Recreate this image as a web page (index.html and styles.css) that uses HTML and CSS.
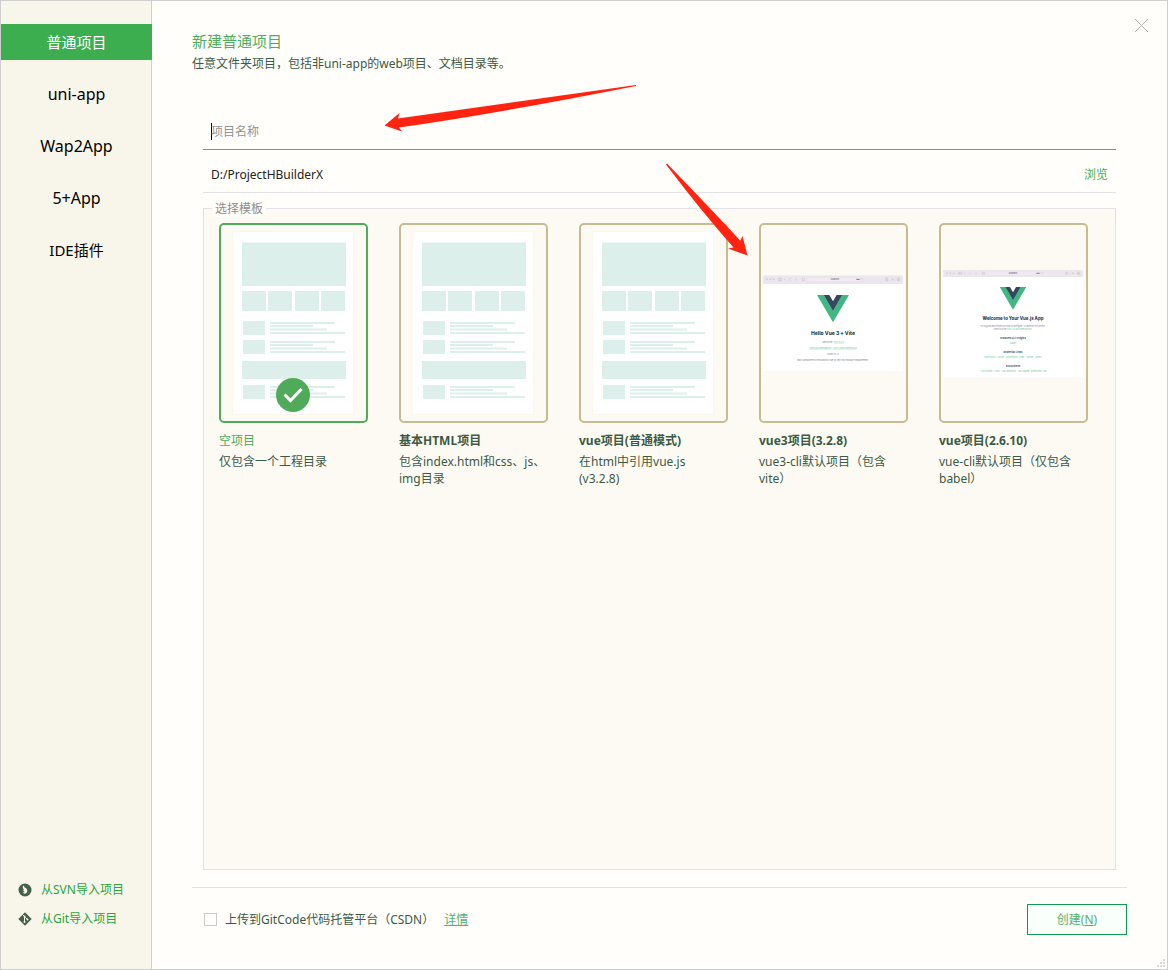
FILE: index.html
```html
<!DOCTYPE html>
<html lang="zh-CN">
<head>
<meta charset="utf-8">
<meta name="viewport" content="width=device-width, initial-scale=1">
<title>新建普通项目</title>
<link rel="stylesheet" href="styles.css">
</head>
<body>
<svg class="defs" width="0" height="0" aria-hidden="true">
  <defs>
    <symbol id="page" viewBox="0 0 145 196">
      <rect class="sheet-edge" x="11" y="6" width="122" height="184"/>
      <rect class="sheet" x="12" y="7" width="120" height="182"/>
      <g class="mint">
        <path d="M21 17.5h104V61H21zM21 66h24v20H21zM47 66h24v20H47zM74 66h24v20H74zM100 66h24v20h-24zM21 136h104v18H21z"/>
        <path id="row" d="M22 96h22v14H22zM49 97h65v2H49zM49 100h43v2H49zM49 103.500h57v2H49zM49 107h75v2H49z"/>
        <use href="#row" y="19"/>
        <use href="#row" y="64"/>
      </g>
    </symbol>
    <symbol id="vue" viewBox="0 0 96 82">
      <path fill="#41b883" d="M0 0h20l28 47L76 0h20L48 82z"/>
      <path fill="#35495e" d="M20 0h17l11 19L59 0h17L48 48z"/>
    </symbol>
    <symbol id="toolbar" viewBox="0 0 420 26" preserveAspectRatio="none">
      <path fill="#ece6ee" d="M4 0h412q4 0 4 4v22H0V4q0-4 4-4z"/>
      <rect fill="#f0ebf2" stroke="#e0d9e3" x="133" y="6" width="168" height="14" rx="3"/>
      <g fill="#d3cdd6"><circle cx="12" cy="12" r="3"/><circle cx="22" cy="12" r="3"/><circle cx="32" cy="12" r="3"/></g>
      <g fill="none" stroke="#c4bec8" stroke-width="1.500">
        <path d="M47 8h9v8h-9zM50 8v8M63 11l2 2 2-2M83 8l-4 4 4 4M97 8l4 4-4 4M118 8h6v8h-6zM368 10h6v7h-6zM371 5v8M386 12h7M389 8v8M403 8h7v8h-7zM406 8v8"/>
      </g>
      <path stroke="#77717c" stroke-width="3" d="M280 12h10"/>
      <circle cx="296" cy="12" r="3" fill="none" stroke="#c4bec8"/>
    </symbol>
  </defs>
</svg>

<div class="dialog">
  <aside class="side">
    <nav class="types">
      <button type="button" class="type active">普通项目</button>
      <button type="button" class="type latin">uni-app</button>
      <button type="button" class="type latin">Wap2App</button>
      <button type="button" class="type latin">5+App</button>
      <button type="button" class="type">IDE插件</button>
    </nav>
    <div class="imports">
      <a href="#svn" class="import">
        <svg width="14" height="14" viewBox="0 0 14 14" aria-hidden="true"><circle cx="7" cy="7" r="6.500" fill="#44604a"/><path fill="#f8f5ea" d="M5 2.500c1 .1 1.400 1 1.600 2C8.500 5 9.500 6.500 9.300 8.300 9 10 7.800 10.900 6.300 10.800L4.600 9.500l2.200-.3L5 7.500l1-.4L4.800 5z"/></svg>
        从SVN导入项目
      </a>
      <a href="#git" class="import">
        <svg width="14" height="14" viewBox="0 0 14 14" aria-hidden="true"><path fill="#44604a" d="M7 .3 13.700 7 7 13.700.3 7z"/><g fill="none" stroke="#f8f5ea"><path d="M4.500 2.500 6.500 4.500v6M6.500 4.800l3 2.700"/></g><g fill="#f8f5ea"><circle cx="6.500" cy="4.500" r="1"/><circle cx="6.500" cy="10" r="1"/><circle cx="9.500" cy="7.500" r="1"/></g></svg>
        从Git导入项目
      </a>
    </div>
  </aside>

  <main class="main">
    <button type="button" class="close" aria-label="关闭">
      <svg width="13" height="13" viewBox="0 0 13 13" aria-hidden="true"><path d="M0 0l13 13M13 0 0 13" stroke="#b4b4b4" fill="none"/></svg>
    </button>
    <h1 class="title">新建普通项目</h1>
    <p class="desc">任意文件夹项目，包括非uni-app的web项目、文档目录等。</p>

    <div class="form">
      <div class="field name">
        <span class="caret"></span>
        <input type="text" class="input" placeholder="项目名称" aria-label="项目名称">
      </div>
      <div class="field path">
        <input type="text" class="input" value="D:/ProjectHBuilderX" aria-label="项目路径">
        <button type="button" class="browse">浏览</button>
      </div>

      <fieldset class="templates">
        <legend>选择模板</legend>
        <div class="cards">
          <label class="card">
            <input type="radio" name="tpl" class="pick" checked>
            <span class="thumb">
              <svg viewBox="0 0 145 196" aria-hidden="true"><use href="#page"/><circle cx="72" cy="170" r="17" fill="#4fab59"/><path d="M63.500 169.500l6 6 11-11.500" fill="none" stroke="#fff" stroke-width="3"/></svg>
            </span>
            <span class="label">空项目</span>
            <span class="note">仅包含一个工程目录</span>
          </label>
          <label class="card">
            <input type="radio" name="tpl" class="pick">
            <span class="thumb"><svg viewBox="0 0 145 196" aria-hidden="true"><use href="#page"/></svg></span>
            <span class="label">基本HTML项目</span>
            <span class="note">包含index.html和css、js、img目录</span>
          </label>
          <label class="card">
            <input type="radio" name="tpl" class="pick">
            <span class="thumb"><svg viewBox="0 0 145 196" aria-hidden="true"><use href="#page"/></svg></span>
            <span class="label">vue项目(普通模式)</span>
            <span class="note">在html中引用vue.js (v3.2.8)</span>
          </label>
          <label class="card">
            <input type="radio" name="tpl" class="pick">
            <span class="thumb">
              <svg viewBox="0 0 435 588" class="shot" aria-hidden="true">
                <rect x="6" y="160" width="420" height="278" fill="#fff"/>
                <use href="#toolbar" x="6" y="151" width="420" height="26"/>
                <use href="#vue" x="168" y="210" width="96" height="82"/>
                <text class="bar" x="222" y="166">localhost</text>
                <text class="h" x="216" y="329">Hello Vue 3 + Vite</text>
                <text class="t" x="216" y="353">Welcome: <tspan class="g">hx2.8.0.0</tspan></text>
                <text class="t" x="216" y="371"><tspan class="g">Vite Documentation</tspan> | <tspan class="g">Vue 3 Documentation</tspan></text>
                <text class="t" x="216" y="390">count is: 0</text>
                <text class="t" x="216" y="408">Edit components/HelloWorld.vue to test hot module replacement.</text>
              </svg>
            </span>
            <span class="label">vue3项目(3.2.8)</span>
            <span class="note">vue3-cli默认项目（包含vite）</span>
          </label>
          <label class="card">
            <input type="radio" name="tpl" class="pick">
            <span class="thumb">
              <svg viewBox="0 0 435 588" class="shot dense" aria-hidden="true">
                <rect x="6" y="140" width="420" height="316" fill="#fff"/>
                <use href="#toolbar" x="6" y="135" width="420" height="21"/>
                <use href="#vue" x="176" y="186" width="80" height="68"/>
                <text class="bar" x="216" y="148">localhost</text>
                <text class="h" x="216" y="286">Welcome to Your Vue.js App</text>
                <text class="t" x="216" y="306">For a guide and recipes on how to configure / customize this project,</text>
                <text class="t" x="216" y="315">check out the <tspan class="g">vue-cli documentation.</tspan></text>
                <text class="s" x="216" y="342">Installed CLI Plugins</text>
                <text class="t g" x="216" y="357">babel</text>
                <text class="s" x="216" y="384">Essential Links</text>
                <text class="t g" x="146" y="399">Core Docs</text>
                <text class="t g" x="179" y="399">Forum</text>
                <text class="t g" x="222" y="399">Community Chat</text>
                <text class="t g" x="266" y="399">Twitter</text>
                <text class="t g" x="293" y="399">News</text>
                <text class="s" x="216" y="426">Ecosystem</text>
                <text class="t g" x="137" y="441">vue-router</text>
                <text class="t g" x="168" y="441">vuex</text>
                <text class="t g" x="203" y="441">vue-devtools</text>
                <text class="t g" x="248" y="441">vue-loader</text>
                <text class="t g" x="293" y="441">awesome-vue</text>
              </svg>
            </span>
            <span class="label">vue项目(2.6.10)</span>
            <span class="note">vue-cli默认项目（仅包含babel）</span>
          </label>
        </div>
      </fieldset>
    </div>

    <footer class="footer">
      <input type="checkbox" id="upload" class="check">
      <label for="upload">上传到GitCode代码托管平台（CSDN）</label>
      <a href="#detail" class="detail">详情</a>
      <button type="button" class="create">创建(<u>N</u>)</button>
    </footer>
    <svg class="grip" width="8" height="8" viewBox="0 0 8 8" aria-hidden="true"><path fill="#d8d8d8" d="M6 0h2v2H6zM3 3h2v2H3zM6 3h2v2H6zM0 6h2v2H0zM3 6h2v2H3zM6 6h2v2H6z"/></svg>
  </main>

  <svg class="arrows" width="364" height="172" viewBox="384 84 364 172" aria-hidden="true">
    <g fill="#ff2412">
      <path d="M636 85 398 118.500 399.500 113 384.500 125.500 402 131.500 399 127.500Q500 113 636 86z"/>
      <path d="M667 163.500Q712 210 740.300 240.700L742.500 236 747.500 255.500 728 248.500 733.500 247.500Q702 212 666 164.500z"/>
    </g>
  </svg>
</div>
</body>
</html>
```
FILE: styles.css
```css
* { box-sizing: border-box; }

body {
  margin: 0;
  font: 12px/17px "Noto Sans", "Noto Sans CJK SC", sans-serif;
  color: #3c5a44;
  background: #fffefa;
}

button, input {
  font: inherit;
  color: inherit;
  background: none;
  border: 0;
  padding: 0;
  margin: 0;
}

button { cursor: pointer; }

.defs { position: absolute; }

.dialog {
  position: relative;
  display: flex;
  min-height: 100vh;
  border: 1px solid #cfcfcf;
}

.side {
  flex: none;
  width: 151px;
  display: flex;
  flex-direction: column;
  justify-content: space-between;
  padding: 23px 0 42px;
  background: #f8f5ea;
  border-right: 1px solid #cfcfcf;
}

.types {
  display: flex;
  flex-direction: column;
  gap: 16px;
}

.type {
  height: 36px;
  margin-right: -1px;
  font-size: 15px;
  color: #000;
}

.type.latin { font-size: 16px; }

.type.active {
  background: #3cae4f;
  color: #fff;
}

.imports {
  display: flex;
  flex-direction: column;
  gap: 12px;
  padding-left: 17px;
}

.import {
  display: flex;
  align-items: center;
  gap: 9px;
  color: #2ba53c;
  text-decoration: none;
}

.main {
  flex: 1;
  min-width: 0;
  position: relative;
  display: flex;
  flex-direction: column;
  padding: 28px 40px 34px;
}

.close {
  position: absolute;
  top: 18px;
  right: 19px;
  line-height: 0;
}

.title {
  margin: 0;
  font-size: 15px;
  line-height: 24px;
  font-weight: 400;
  color: #4fae5c;
}

.desc { margin: 2px 0 0; }

.form {
  flex: 1;
  display: flex;
  flex-direction: column;
  padding: 40px 11px 17px;
  border-bottom: 1px solid #e2e2e2;
}

.field {
  display: flex;
  align-items: center;
  padding: 0 8px;
  border-bottom: 1px solid #e2e2e6;
}

.name {
  height: 38px;
  padding-top: 2px;
  border-color: #45b85c;
}

.path { height: 43px; padding-top: 6px; }

.caret {
  width: 1px;
  height: 17px;
  margin-right: -1px;
  background: #000;
}

.input {
  flex: 1;
  min-width: 0;
  height: 20px;
  color: #222;
  outline: 0;
}

.input::placeholder { color: #939393; opacity: 1; }

.browse { color: #44ad62; }

.templates {
  flex: 1;
  min-width: 0;
  margin: 7px 0 0;
  padding: 6px 15px;
  border: 1px solid #e2e2e6;
  background: #fdfaf4;
}

.templates legend {
  margin-left: -7px;
  padding: 0 3px;
  color: #8e8e8e;
  background: #fffdf8;
}

.cards {
  display: grid;
  grid-template-columns: repeat(auto-fill, 149px);
  gap: 24px 31px;
}

.card {
  display: flex;
  flex-direction: column;
  position: relative;
}

.pick {
  position: absolute;
  opacity: 0;
}

.thumb {
  border: 2px solid #c7bb91;
  border-radius: 5px;
  line-height: 0;
  margin-bottom: 9px;
}

.thumb svg { display: block; width: 100%; }

.label {
  font-weight: 700;
  margin-bottom: 4px;
}

.pick:checked ~ .thumb { border-color: #4fab59; }
.pick:checked ~ .label { color: #4fab59; font-weight: 400; }

.sheet-edge { fill: #fbf7eb; }
.sheet { fill: #fff; }
.mint { fill: #ddefea; }

.shot text {
  font-family: Inter, sans-serif;
  text-anchor: middle;
  fill: #7c8590;
}

.shot .h { font-size: 15px; font-weight: 800; fill: #2c3e50; }
.shot .s { font-size: 8px; font-weight: 600; fill: #2c3e50; }
.shot .t { font-size: 7px; }
.shot .bar { font-size: 6px; fill: #55505a; }
.shot .g { fill: #6fcba1; text-decoration: underline; }
.dense .h { font-size: 13px; }
.dense .t { font-size: 6px; }
.dense .g { font-size: 7px; text-decoration: none; }

.footer {
  display: flex;
  align-items: center;
  padding: 16px 0 0 12px;
}

.check {
  appearance: none;
  width: 13px;
  height: 13px;
  margin-right: 8px;
  border: 1px solid #cacaca;
  background: #fffefc;
}

.check:checked { background: #4fab59; }

.detail {
  margin-left: 10px;
  color: #55b070;
}

.create {
  width: 100px;
  height: 31px;
  margin-left: auto;
  border: 1px solid #0f9b50;
  background: #f9fffa;
  color: #55b070;
}

.grip {
  position: absolute;
  right: 2px;
  bottom: 2px;
}

.arrows {
  position: absolute;
  left: 383px;
  top: 83px;
  pointer-events: none;
}
```
